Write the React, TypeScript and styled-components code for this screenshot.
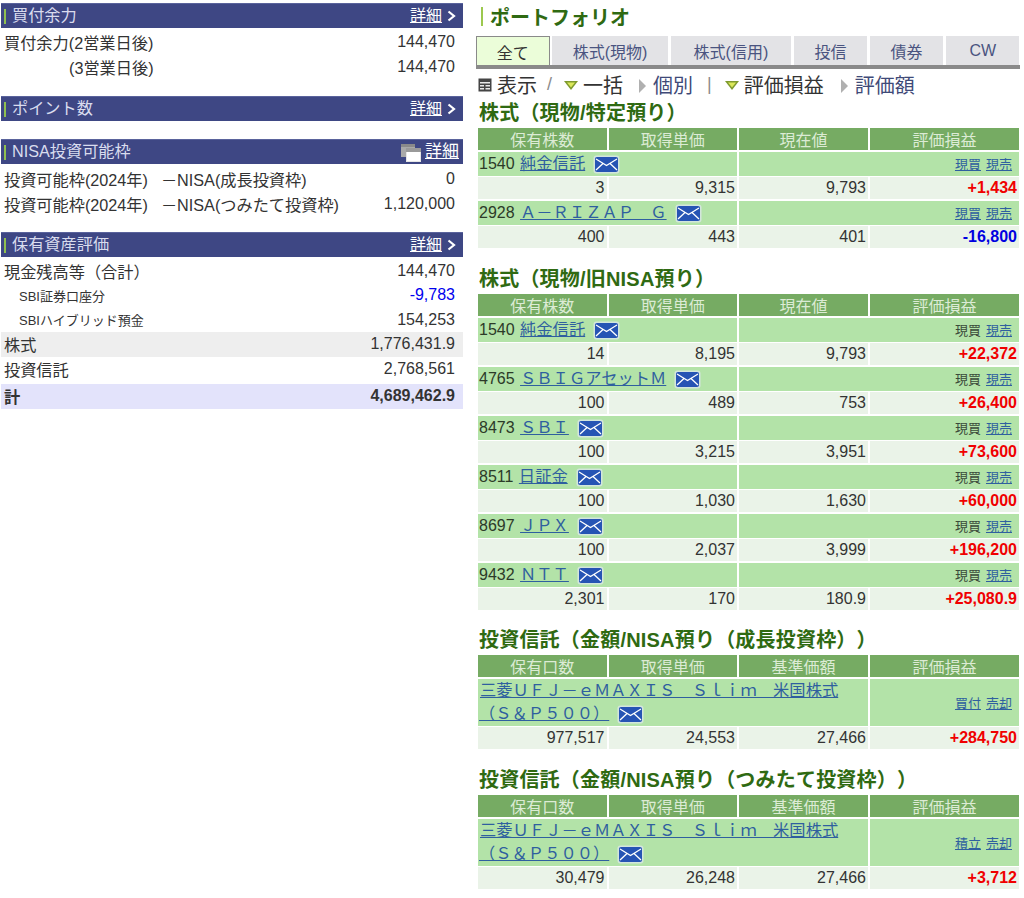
import * as React from "react";
import styled, { createGlobalStyle } from "styled-components";

const GlobalStyle = createGlobalStyle`
  body {
    margin: 0;
    background: #ffffff;
    color: #333333;
    font-family: "Liberation Sans", "Noto Sans CJK JP", sans-serif;
    font-size: 16px;
    text-spacing-trim: space-all;
  }
`;

const Page = styled.div`
  display: flex;
  align-items: flex-start;
  width: 1024px;
  height: 898px;
  overflow: hidden;
  padding-top: 3px;
  box-sizing: border-box;
`;

const LeftColumn = styled.div`
  width: 462px;
  margin-left: 1px;
  margin-right: 13px;
  flex: none;
`;

const RightColumn = styled.div`
  width: 544px;
  flex: none;
`;

const Panel = styled.section<{ $after: number }>`
  margin-bottom: ${(p) => p.$after}px;
`;

const Bar = styled.div`
  display: flex;
  align-items: center;
  height: 25px;
  background: #3e4784;
  border-top: 1px solid #5a639c;
  box-sizing: border-box;
  padding: 0 7px 0 3px;
  color: #d9dcee;
`;

const BarMark = styled.span`
  width: 2px;
  height: 15px;
  margin-right: 6px;
  background: #8fc04f;
`;

const BarTitle = styled.span`
  flex: 1;
  margin-top: -2px;
  line-height: 22px;
  font-size: 16.2px;
`;

const BarLink = styled.a<{ $wide?: boolean }>`
  color: #ffffff;
  text-decoration: underline;
  line-height: 22px;
  font-size: ${(p) => (p.$wide ? 17 : 16)}px;
  margin-right: ${(p) => (p.$wide ? -3 : 0)}px;
`;

const ChevronIcon = styled.svg`
  width: 9px;
  height: 12px;
  margin-left: 5px;
`;

const WindowIcon = styled.svg`
  width: 20px;
  height: 19px;
  margin-right: 4px;
`;

const Rows = styled.div<{ $top: number }>`
  padding-top: ${(p) => p.$top}px;
`;

const Row = styled.div<{ $tone?: "gray" | "violet"; $mt?: number }>`
  display: flex;
  justify-content: space-between;
  align-items: center;
  height: 24.5px;
  margin-top: ${(p) => p.$mt ?? 0}px;
  padding: 0 8px 0 3px;
  background: ${(p) =>
    p.$tone === "gray" ? "#eeeeee" : p.$tone === "violet" ? "#e3e3fb" : "transparent"};
`;

const RowLabel = styled.span<{ $indent?: number; $small?: boolean; $bold?: boolean }>`
  padding-left: ${(p) => p.$indent ?? 0}px;
  font-size: ${(p) => (p.$small ? 13 : 16.2)}px;
  font-weight: ${(p) => (p.$bold ? 700 : 400)};
  white-space: pre;
`;

const NisaKind = styled.span`
  margin-left: 13px;
`;

const RowValue = styled.span<{ $blue?: boolean; $bold?: boolean }>`
  color: ${(p) => (p.$blue ? "#0000ee" : "#333333")};
  font-weight: ${(p) => (p.$bold ? 700 : 400)};
`;

const PageTitle = styled.h1`
  display: flex;
  align-items: center;
  height: 27px;
  margin: 0 0 6px;
  padding-left: 5px;
  font-size: 20px;
  font-weight: 700;
  color: #2f6a12;
`;

const TitleMark = styled.span`
  width: 2px;
  height: 19px;
  margin-right: 7px;
  background: #9cc84f;
`;

const TabBar = styled.div`
  display: flex;
  gap: 2.6px;
  height: 29px;
  border-bottom: 4px solid #8a8a8a;
`;

const Tab = styled.div<{ $w: number; $active?: boolean }>`
  display: flex;
  align-items: center;
  justify-content: center;
  width: ${(p) => p.$w}px;
  box-sizing: border-box;
  padding-top: 1px;
  background: ${(p) => (p.$active ? "#ebfdd9" : "#e3e3e6")};
  color: ${(p) => (p.$active ? "#333333" : "#4a5480")};
  border: ${(p) => (p.$active ? "1px solid #8a8a8a" : "none")};
  border-bottom: none;
`;

const ViewBar = styled.div`
  display: flex;
  align-items: center;
  height: 32px;
  padding: 0 0 1px 2px;
  box-sizing: border-box;
  font-size: 20px;
  color: #333333;
  white-space: nowrap;
`;

const ViewLink = styled.span`
  color: #3f4a78;
`;

const ViewSep = styled.span<{ $l: number }>`
  margin-left: ${(p) => p.$l}px;
  color: #8c8c8c;
  font-size: 18px;
`;

const GridIcon = styled.svg`
  width: 14px;
  height: 14px;
  margin-right: 5px;
`;

const TriDown = styled.svg<{ $l: number }>`
  width: 14px;
  height: 9px;
  margin: 2px 5px 0 ${(p) => p.$l}px;
`;

const TriRight = styled.svg<{ $l: number }>`
  width: 7px;
  height: 14px;
  margin: 2px 7px 0 ${(p) => p.$l}px;
`;

const Section = styled.section<{ $after: number }>`
  padding-left: 2px;
  margin-bottom: ${(p) => p.$after}px;
`;

const SectionTitle = styled.h2`
  height: 24px;
  margin: 0 0 3px;
  padding-left: 1px;
  font-size: 20px;
  letter-spacing: 0.2px;
  line-height: 24px;
  font-weight: 700;
  color: #2f6a12;
  white-space: nowrap;
`;

const DataGrid = styled.div`
  display: grid;
  grid-template-columns: 128.5px 128.5px 129px 149px;
  column-gap: 2px;
  row-gap: 1.5px;
`;

const HeadCell = styled.div`
  display: flex;
  align-items: center;
  justify-content: center;
  height: 22px;
  background: #76ab63;
  color: #dcebd5;
`;

const NameCell = styled.div<{ $span: number; $tall?: boolean }>`
  grid-column: span ${(p) => p.$span};
  min-height: ${(p) => (p.$tall ? 47 : 24)}px;
  padding-left: 1px;
  background: #b3e3a8;
  line-height: 23px;
  color: #2c3a28;
`;

const ActionCell = styled.div<{ $span: number }>`
  grid-column: span ${(p) => p.$span};
  display: flex;
  align-items: center;
  justify-content: flex-end;
  gap: 5px;
  padding-right: 7px;
  background: #b3e3a8;
  font-size: 13px;
`;

const ValueCell = styled.div<{ $tone?: "up" | "down" }>`
  display: flex;
  align-items: center;
  justify-content: flex-end;
  height: 22px;
  padding-right: 2px;
  background: #eaf3e8;
  font-weight: ${(p) => (p.$tone ? 700 : 400)};
  color: ${(p) => (p.$tone === "up" ? "#f00000" : p.$tone === "down" ? "#0000e0" : "#333333")};
`;

const FundLink = styled.a`
  margin-left: 1px;
  font-size: 16.3px;
  color: #2f5f9f;
  text-decoration: underline;
  white-space: pre-line;
`;

const ActionLink = styled.a<{ $plain?: boolean }>`
  color: ${(p) => (p.$plain ? "#3a4a3a" : "#2f5f9f")};
  text-decoration: ${(p) => (p.$plain ? "none" : "underline")};
`;

const MailIcon = styled.svg`
  width: 27px;
  height: 19px;
  margin-left: 8px;
  vertical-align: -5px;
`;

const Mail = () => (
  <MailIcon viewBox="0 0 27 19">
    <rect x="0.5" y="0.5" width="26" height="18" rx="3" fill="#d3e6dc" />
    <rect x="2" y="2" width="23" height="15" rx="2" fill="#2654b4" />
    <path d="M3 4l10.5 6.5L24 4M3 15l7-6.5M24 15l-7-6.5" fill="none" stroke="#ffffff" strokeWidth="1.3" />
  </MailIcon>
);

const Chevron = () => (
  <ChevronIcon viewBox="0 0 9 12">
    <path d="M1.5 1.5L7 6l-5.5 4.5" fill="none" stroke="#ffffff" strokeWidth="2.2" />
  </ChevronIcon>
);

const Down = ({ l }: { l: number }) => (
  <TriDown $l={l} viewBox="0 0 14 9">
    <path d="M0 0h14L7 9z" fill="#7e9a2e" />
    <path d="M3 1.5h8L7 6.5z" fill="#dce85a" />
  </TriDown>
);

const Right = ({ l }: { l: number }) => (
  <TriRight $l={l} viewBox="0 0 7 14">
    <path d="M0 0l7 7-7 7z" fill="#b0b0b0" />
  </TriRight>
);

type Holding = {
  code?: string;
  name: string;
  tall?: boolean;
  plainBuy?: boolean;
  actions: [string, string];
  values: [string, string, string, string];
  tone: "up" | "down";
};

const Table = ({ heads, rows }: { heads: string[]; rows: Holding[] }) => (
  <DataGrid>
    {heads.map((h) => (
      <HeadCell key={h}>{h}</HeadCell>
    ))}
    {rows.map((r) => (
      <React.Fragment key={r.name + r.values[0]}>
        <NameCell $span={r.tall ? 3 : 2} $tall={r.tall}>
          {r.code && `${r.code} `}
          <FundLink>{r.name}</FundLink>
          <Mail />
        </NameCell>
        <ActionCell $span={r.tall ? 1 : 2}>
          <ActionLink $plain={r.plainBuy}>{r.actions[0]}</ActionLink>
          <ActionLink>{r.actions[1]}</ActionLink>
        </ActionCell>
        <ValueCell>{r.values[0]}</ValueCell>
        <ValueCell>{r.values[1]}</ValueCell>
        <ValueCell>{r.values[2]}</ValueCell>
        <ValueCell $tone={r.tone}>{r.values[3]}</ValueCell>
      </React.Fragment>
    ))}
  </DataGrid>
);

const stockHeads = ["保有株数", "取得単価", "現在値", "評価損益"];
const fundHeads = ["保有口数", "取得単価", "基準価額", "評価損益"];

const stock = (
  code: string,
  name: string,
  values: [string, string, string, string],
  plainBuy: boolean,
  tone: "up" | "down" = "up"
): Holding => ({ code, name, values, plainBuy, tone, actions: ["現買", "現売"] });

const tokutei: Holding[] = [
  stock("1540", "純金信託", ["3", "9,315", "9,793", "+1,434"], false),
  stock("2928", "Ａ－ＲＩＺＡＰ　Ｇ", ["400", "443", "401", "-16,800"], false, "down"),
];

const oldNisa: Holding[] = [
  stock("1540", "純金信託", ["14", "8,195", "9,793", "+22,372"], true),
  stock("4765", "ＳＢＩＧアセットＭ", ["100", "489", "753", "+26,400"], true),
  stock("8473", "ＳＢＩ", ["100", "3,215", "3,951", "+73,600"], true),
  stock("8511", "日証金", ["100", "1,030", "1,630", "+60,000"], true),
  stock("8697", "ＪＰＸ", ["100", "2,037", "3,999", "+196,200"], true),
  stock("9432", "ＮＴＴ", ["2,301", "170", "180.9", "+25,080.9"], true),
];

const fundName = "三菱ＵＦＪ－ｅＭＡＸＩＳ　Ｓｌｉｍ　米国株式\n（Ｓ＆Ｐ５００）";

const growth: Holding[] = [
  { name: fundName, tall: true, tone: "up", actions: ["買付", "売却"], values: ["977,517", "24,553", "27,466", "+284,750"] },
];

const tsumitate: Holding[] = [
  { name: fundName, tall: true, tone: "up", actions: ["積立", "売却"], values: ["30,479", "26,248", "27,466", "+3,712"] },
];

const tabs = [
  { label: "全て", w: 73.5, active: true },
  { label: "株式(現物)", w: 116 },
  { label: "株式(信用)", w: 120.5 },
  { label: "投信", w: 73.5 },
  { label: "債券", w: 73.5 },
  { label: "CW", w: 73.5 },
];

const App = () => (
  <>
    <GlobalStyle />
    <Page>
      <LeftColumn>
        <Panel $after={17}>
          <Bar>
            <BarMark />
            <BarTitle>買付余力</BarTitle>
            <BarLink>詳細</BarLink>
            <Chevron />
          </Bar>
          <Rows $top={2}>
            <Row>
              <RowLabel>買付余力(2営業日後)</RowLabel>
              <RowValue>144,470</RowValue>
            </Row>
            <Row>
              <RowLabel $indent={65}>(3営業日後)</RowLabel>
              <RowValue>144,470</RowValue>
            </Row>
          </Rows>
        </Panel>

        <Panel $after={18}>
          <Bar>
            <BarMark />
            <BarTitle>ポイント数</BarTitle>
            <BarLink>詳細</BarLink>
            <Chevron />
          </Bar>
        </Panel>

        <Panel $after={16}>
          <Bar>
            <BarMark />
            <BarTitle>NISA投資可能枠</BarTitle>
            <WindowIcon viewBox="0 0 20 19">
              <rect x="0" y="1" width="14" height="13" fill="#a9a9a9" />
              <rect x="0" y="1" width="14" height="3" fill="#8a8a8a" />
              <rect x="5" y="5" width="15" height="14" fill="#e6e6e6" />
              <rect x="5" y="5" width="15" height="4" fill="#9a9a9a" />
              <rect x="6" y="9" width="13" height="9" fill="#ffffff" />
            </WindowIcon>
            <BarLink $wide>詳細</BarLink>
          </Bar>
          <Rows $top={3}>
            <Row>
              <RowLabel>
                投資可能枠(2024年)<NisaKind>－NISA(成長投資枠)</NisaKind>
              </RowLabel>
              <RowValue>0</RowValue>
            </Row>
            <Row>
              <RowLabel>
                投資可能枠(2024年)<NisaKind>－NISA(つみたて投資枠)</NisaKind>
              </RowLabel>
              <RowValue>1,120,000</RowValue>
            </Row>
          </Rows>
        </Panel>

        <Panel $after={0}>
          <Bar>
            <BarMark />
            <BarTitle>保有資産評価</BarTitle>
            <BarLink>詳細</BarLink>
            <Chevron />
          </Bar>
          <Rows $top={1.5}>
            <Row>
              <RowLabel>現金残高等（合計）</RowLabel>
              <RowValue>144,470</RowValue>
            </Row>
            <Row>
              <RowLabel $indent={15} $small>SBI証券口座分</RowLabel>
              <RowValue $blue>-9,783</RowValue>
            </Row>
            <Row>
              <RowLabel $indent={15} $small>SBIハイブリッド預金</RowLabel>
              <RowValue>154,253</RowValue>
            </Row>
            <Row $tone="gray">
              <RowLabel>株式</RowLabel>
              <RowValue>1,776,431.9</RowValue>
            </Row>
            <Row>
              <RowLabel>投資信託</RowLabel>
              <RowValue>2,768,561</RowValue>
            </Row>
            <Row $tone="violet" $mt={3}>
              <RowLabel $bold>計</RowLabel>
              <RowValue $bold>4,689,462.9</RowValue>
            </Row>
          </Rows>
        </Panel>
      </LeftColumn>

      <RightColumn>
        <PageTitle>
          <TitleMark />
          ポートフォリオ
        </PageTitle>
        <TabBar>
          {tabs.map((t) => (
            <Tab key={t.label} $w={t.w} $active={t.active}>
              {t.label}
            </Tab>
          ))}
        </TabBar>
        <ViewBar>
          <GridIcon viewBox="0 0 14 14">
            <rect x="0.5" y="0.5" width="13" height="13" fill="#444444" />
            <path d="M2 4h10v1.6H2zM2 7h4v1.6H2zM7.5 7H12v1.6H7.5zM2 10h4v1.6H2zM7.5 10H12v1.6H7.5z" fill="#e8e8e8" />
          </GridIcon>
          表示
          <ViewSep $l={10}>/</ViewSep>
          <Down l={12} />
          一括
          <Right l={16} />
          <ViewLink>個別</ViewLink>
          <ViewSep $l={14}>|</ViewSep>
          <Down l={13} />
          評価損益
          <Right l={17} />
          <ViewLink>評価額</ViewLink>
        </ViewBar>

        <Section $after={19}>
          <SectionTitle>株式（現物/特定預り）</SectionTitle>
          <Table heads={stockHeads} rows={tokutei} />
        </Section>
        <Section $after={18}>
          <SectionTitle>株式（現物/旧NISA預り）</SectionTitle>
          <Table heads={stockHeads} rows={oldNisa} />
        </Section>
        <Section $after={19}>
          <SectionTitle>投資信託（金額/NISA預り（成長投資枠））</SectionTitle>
          <Table heads={fundHeads} rows={growth} />
        </Section>
        <Section $after={0}>
          <SectionTitle>投資信託（金額/NISA預り（つみたて投資枠））</SectionTitle>
          <Table heads={fundHeads} rows={tsumitate} />
        </Section>
      </RightColumn>
    </Page>
  </>
);

export default App;
